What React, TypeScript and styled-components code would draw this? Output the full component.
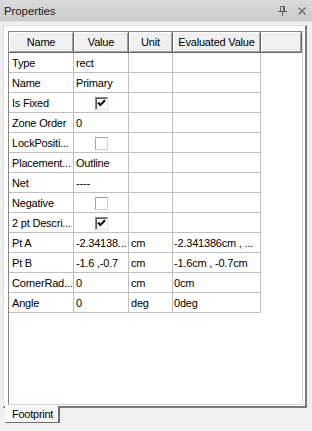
import styled, { createGlobalStyle } from "styled-components"

const GlobalStyle = createGlobalStyle`
  html, body {
    margin: 0;
    padding: 0;
    background: #f0f0f0;
  }
  body {
    font-family: "Liberation Sans", Arial, sans-serif;
    font-size: 11px;
    color: #000000;
  }
`

type Row = {
  name: string
  value?: string
  check?: boolean
  unit?: string
  evaluated?: string
}

const rows: Row[] = [
  { name: "Type", value: "rect" },
  { name: "Name", value: "Primary" },
  { name: "Is Fixed", check: true },
  { name: "Zone Order", value: "0" },
  { name: "LockPositi...", check: false },
  { name: "Placement...", value: "Outline" },
  { name: "Net", value: "----" },
  { name: "Negative", check: false },
  { name: "2 pt Descri...", check: true },
  { name: "Pt A", value: "-2.34138...", unit: "cm", evaluated: "-2.341386cm , ..." },
  { name: "Pt B", value: "-1.6 ,-0.7", unit: "cm", evaluated: "-1.6cm , -0.7cm" },
  { name: "CornerRad...", value: "0", unit: "cm", evaluated: "0cm" },
  { name: "Angle", value: "0", unit: "deg", evaluated: "0deg" },
]

// column widths, each one counts its right border
const widths = { name: 65, value: 55, unit: 44, evaluated: 88 }

const Panel = styled.div`
  width: 312px;
  height: 431px;
  display: flex;
  flex-direction: column;
  background: #f0f0f0;
  overflow: hidden;
`

const TitleBar = styled.div`
  height: 21px;
  display: flex;
  align-items: center;
  padding: 0 6px 0 4px;
  background: linear-gradient(#dadada, #cbcbcb);
  border-bottom: 1px solid #e2e2e2;
`

const Title = styled.span`
  flex: 1;
  font-size: 11.5px;
  color: #1b1b1b;
  letter-spacing: -0.1px;
`

const TitleButtons = styled.div`
  display: flex;
  align-items: center;
  gap: 11px;
`

const Body = styled.div`
  flex: 1;
  display: flex;
  flex-direction: column;
  padding: 3px 0 0 3px;
`

const Frame = styled.div`
  width: 304px;
  height: 383px;
  box-sizing: border-box;
  background: #ffffff;
  border-top: 1px solid #dedede;
  border-left: 1px solid #dedede;
  border-right: 2px solid #7a7a7a;
  border-bottom: 2px solid #7a7a7a;
  padding: 5px 2px 1px 4px;
`

const Grid = styled.div`
  height: 100%;
  box-sizing: border-box;
  border-top: 1px solid #868686;
  border-left: 1px solid #868686;
  border-right: 1px solid #d6d6d6;
  border-bottom: 1px solid #d6d6d6;
  display: flex;
  flex-direction: column;
`

const HeaderRow = styled.div`
  display: flex;
  height: 21px;
`

const HeaderCell = styled.div<{ $width?: number }>`
  ${(p) => (p.$width ? `width: ${p.$width}px;` : "flex: 1;")}
  box-sizing: border-box;
  background: #f0f0f0;
  border-right: 1px solid #696969;
  border-bottom: 1px solid #696969;
  box-shadow: inset 1px 1px #ffffff, inset -1px -1px #a0a0a0;
  display: flex;
  align-items: center;
  justify-content: center;
  letter-spacing: -0.2px;
  white-space: nowrap;
`

const DataRow = styled.div`
  display: flex;
  height: 20px;
`

const Cell = styled.div<{ $width: number; $pad?: number; $center?: boolean }>`
  width: ${(p) => p.$width}px;
  box-sizing: border-box;
  border-right: 1px solid #c0c0c0;
  border-bottom: 1px solid #c0c0c0;
  padding-left: ${(p) => p.$pad ?? 2}px;
  display: flex;
  align-items: center;
  justify-content: ${(p) => (p.$center ? "center" : "flex-start")};
  white-space: nowrap;
  overflow: hidden;
  letter-spacing: -0.2px;
`

const CheckBox = styled.div<{ $checked: boolean }>`
  width: 13px;
  height: 13px;
  box-sizing: border-box;
  margin-left: -2px;
  margin-top: 1px;
  background: #ffffff;
  display: flex;
  align-items: center;
  justify-content: center;
  border-top: 1px solid ${(p) => (p.$checked ? "#8a8a8a" : "#a4a4a4")};
  border-left: 1px solid ${(p) => (p.$checked ? "#8a8a8a" : "#a4a4a4")};
  border-right: 1px solid ${(p) => (p.$checked ? "#e3e3e3" : "#cfcfcf")};
  border-bottom: 1px solid ${(p) => (p.$checked ? "#e3e3e3" : "#cfcfcf")};
  box-shadow: ${(p) => (p.$checked ? "inset 1px 1px #5a5a5a" : "none")};
`

const TabStrip = styled.div`
  display: flex;
  padding-left: 2px;
  margin-top: -2px;
`

const Tab = styled.div`
  width: 55px;
  height: 17px;
  box-sizing: border-box;
  background: #f8f8f8;
  border-left: 1px solid #ffffff;
  border-right: 2px solid #6e6e6e;
  border-bottom: 1px solid #6e6e6e;
  display: flex;
  align-items: center;
  padding-left: 6px;
  letter-spacing: -0.25px;
`

function PinIcon() {
  return (
    <svg width="9" height="10" viewBox="0 0 9 10">
      <path d="M2.5 0.5h4v5h-4z" fill="none" stroke="#5e5e5e" strokeWidth="1" />
      <path d="M5.5 1v4.5" stroke="#5e5e5e" strokeWidth="1" />
      <path d="M0 5.5h9" stroke="#5e5e5e" strokeWidth="1" />
      <path d="M4.5 6v4" stroke="#5e5e5e" strokeWidth="1" />
    </svg>
  )
}

function CloseIcon() {
  return (
    <svg width="8" height="8" viewBox="0 0 8 8">
      <path d="M0.5 0.5l7 7M7.5 0.5l-7 7" stroke="#6a6a6a" strokeWidth="1.3" />
    </svg>
  )
}

function Tick() {
  return (
    <svg width="9" height="8" viewBox="0 0 9 8">
      <path d="M1 3.5l2.4 2.6L8 1.2" fill="none" stroke="#000000" strokeWidth="2" />
    </svg>
  )
}

function PropertyRow({ row }: { row: Row }) {
  return (
    <DataRow>
      <Cell $width={widths.name} $pad={3}>{row.name}</Cell>
      {row.check !== undefined ? (
        <Cell $width={widths.value} $center>
          <CheckBox $checked={row.check}>{row.check && <Tick />}</CheckBox>
        </Cell>
      ) : (
        <Cell $width={widths.value}>{row.value}</Cell>
      )}
      <Cell $width={widths.unit}>{row.unit}</Cell>
      <Cell $width={widths.evaluated} $pad={1}>{row.evaluated}</Cell>
    </DataRow>
  )
}

export default function App() {
  return (
    <>
      <GlobalStyle />
      <Panel>
        <TitleBar>
          <Title>Properties</Title>
          <TitleButtons>
            <PinIcon />
            <CloseIcon />
          </TitleButtons>
        </TitleBar>
        <Body>
          <Frame>
            <Grid>
              <HeaderRow>
                <HeaderCell $width={widths.name}>Name</HeaderCell>
                <HeaderCell $width={widths.value}>Value</HeaderCell>
                <HeaderCell $width={widths.unit}>Unit</HeaderCell>
                <HeaderCell $width={widths.evaluated}>Evaluated Value</HeaderCell>
                <HeaderCell />
              </HeaderRow>
              {rows.map((row) => (
                <PropertyRow key={row.name} row={row} />
              ))}
            </Grid>
          </Frame>
          <TabStrip>
            <Tab>Footprint</Tab>
          </TabStrip>
        </Body>
      </Panel>
    </>
  )
}
